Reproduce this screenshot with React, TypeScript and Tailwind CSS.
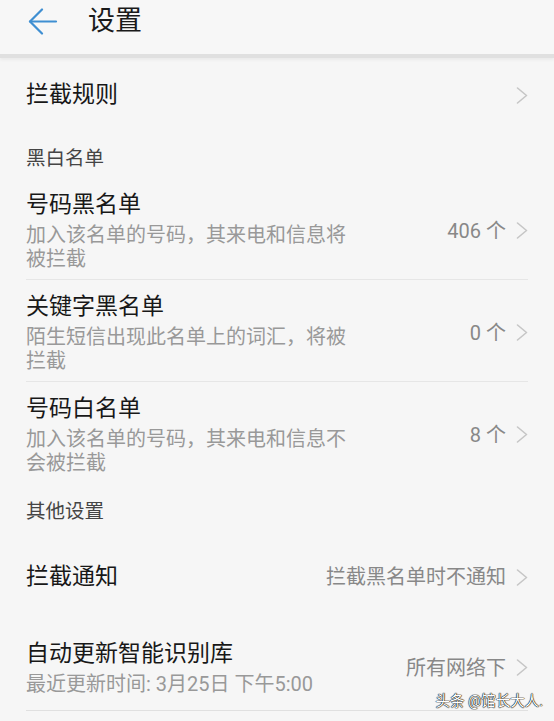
import React from "react";

const font = { fontFamily: 'Roboto, "Noto Sans CJK SC", sans-serif' };

function Chevron() {
  return (
    <svg width="12" height="17" viewBox="0 0 12 17" className="shrink-0">
      <polyline
        points="1.5,1 10.5,8.5 1.5,16"
        fill="none"
        stroke="#c6c6c6"
        strokeWidth="1.6"
        strokeLinecap="round"
        strokeLinejoin="round"
      />
    </svg>
  );
}

function BackArrow() {
  return (
    <svg width="30" height="27" viewBox="0 0 30 27">
      <g fill="none" stroke="#3f8fd2" strokeWidth="2.2" strokeLinecap="round" strokeLinejoin="round">
        <line x1="2" y1="13.5" x2="28" y2="13.5" />
        <polyline points="14,1.5 2,13.5 14,25.5" />
      </g>
    </svg>
  );
}

function SectionTitle({ text, top }: { text: string; top: string }) {
  return (
    <div className={`px-[26px] ${top} pb-[7px] text-[19.5px] leading-[24px] text-[#454545]`}>
      {text}
    </div>
  );
}

type ListRow = {
  title: string;
  desc: string;
  value: string;
  divider: boolean;
};

const blackWhite: ListRow[] = [
  { title: "号码黑名单", desc: "加入该名单的号码，其来电和信息将被拦截", value: "406 个", divider: true },
  { title: "关键字黑名单", desc: "陌生短信出现此名单上的词汇，将被拦截", value: "0 个", divider: true },
  { title: "号码白名单", desc: "加入该名单的号码，其来电和信息不会被拦截", value: "8 个", divider: false },
];

function DescRow({ row }: { row: ListRow }) {
  return (
    <div className="px-[26px]">
      <div className="flex items-center pt-[12px] pb-[8px]">
        <div className="flex-1">
          <div className="text-[23px] leading-[30px] text-[#181818]">{row.title}</div>
          <div className="mt-[3px] w-[330px] text-[20px] leading-[24px] text-[#999999]">{row.desc}</div>
        </div>
        <div className="flex items-center gap-[10px]">
          <span className="text-[20px] text-[#888888]">{row.value}</span>
          <Chevron />
        </div>
      </div>
      {row.divider && <div className="h-px bg-[#e6e6e6]" />}
    </div>
  );
}

export default function App() {
  return (
    <div className="relative w-[554px] h-[721px] overflow-hidden bg-[#f6f6f6]" style={font}>
      {/* 顶部标题栏 */}
      <header className="h-[58px] bg-[#f7f7f7] border-b-[4px] border-[#e0e0e0] shadow-[0_2px_3px_rgba(0,0,0,0.05)]">
        <div className="flex items-center h-[42px] pl-[28px]">
          <BackArrow />
          <span className="ml-[30px] text-[27px] text-[#1a1a1a]">设置</span>
        </div>
      </header>

      <div className="flex items-center justify-between h-[74px] px-[26px]">
        <span className="text-[23px] text-[#181818]">拦截规则</span>
        <Chevron />
      </div>

      <SectionTitle text="黑白名单" top="pt-[15px]" />
      {blackWhite.map((r) => (
        <DescRow key={r.title} row={r} />
      ))}

      <SectionTitle text="其他设置" top="pt-[17px]" />

      <div className="flex items-center justify-between h-[92px] px-[26px]">
        <span className="text-[23px] text-[#181818]">拦截通知</span>
        <div className="flex items-center gap-[10px]">
          <span className="text-[20px] text-[#888888]">拦截黑名单时不通知</span>
          <Chevron />
        </div>
      </div>

      <div className="px-[26px]">
        <div className="flex items-center pt-[16px] pb-[14px]">
          <div className="flex-1">
            <div className="text-[23px] leading-[30px] text-[#181818]">自动更新智能识别库</div>
            <div className="mt-[3px] text-[20px] leading-[24px] text-[#999999]">最近更新时间: 3月25日 下午5:00</div>
          </div>
          <div className="flex items-center gap-[10px]">
            <span className="text-[20px] text-[#888888]">所有网络下</span>
            <Chevron />
          </div>
        </div>
        <div className="h-px bg-[#e0e0e0]" />
      </div>

      {/* 水印 */}
      <div className="absolute right-[11px] top-[691px] text-[14.5px] text-white [text-shadow:0_0_1px_#000,0_0_1px_#000,0_0_1px_#000]">
        头条 @馆长大人.
      </div>
    </div>
  );
}
